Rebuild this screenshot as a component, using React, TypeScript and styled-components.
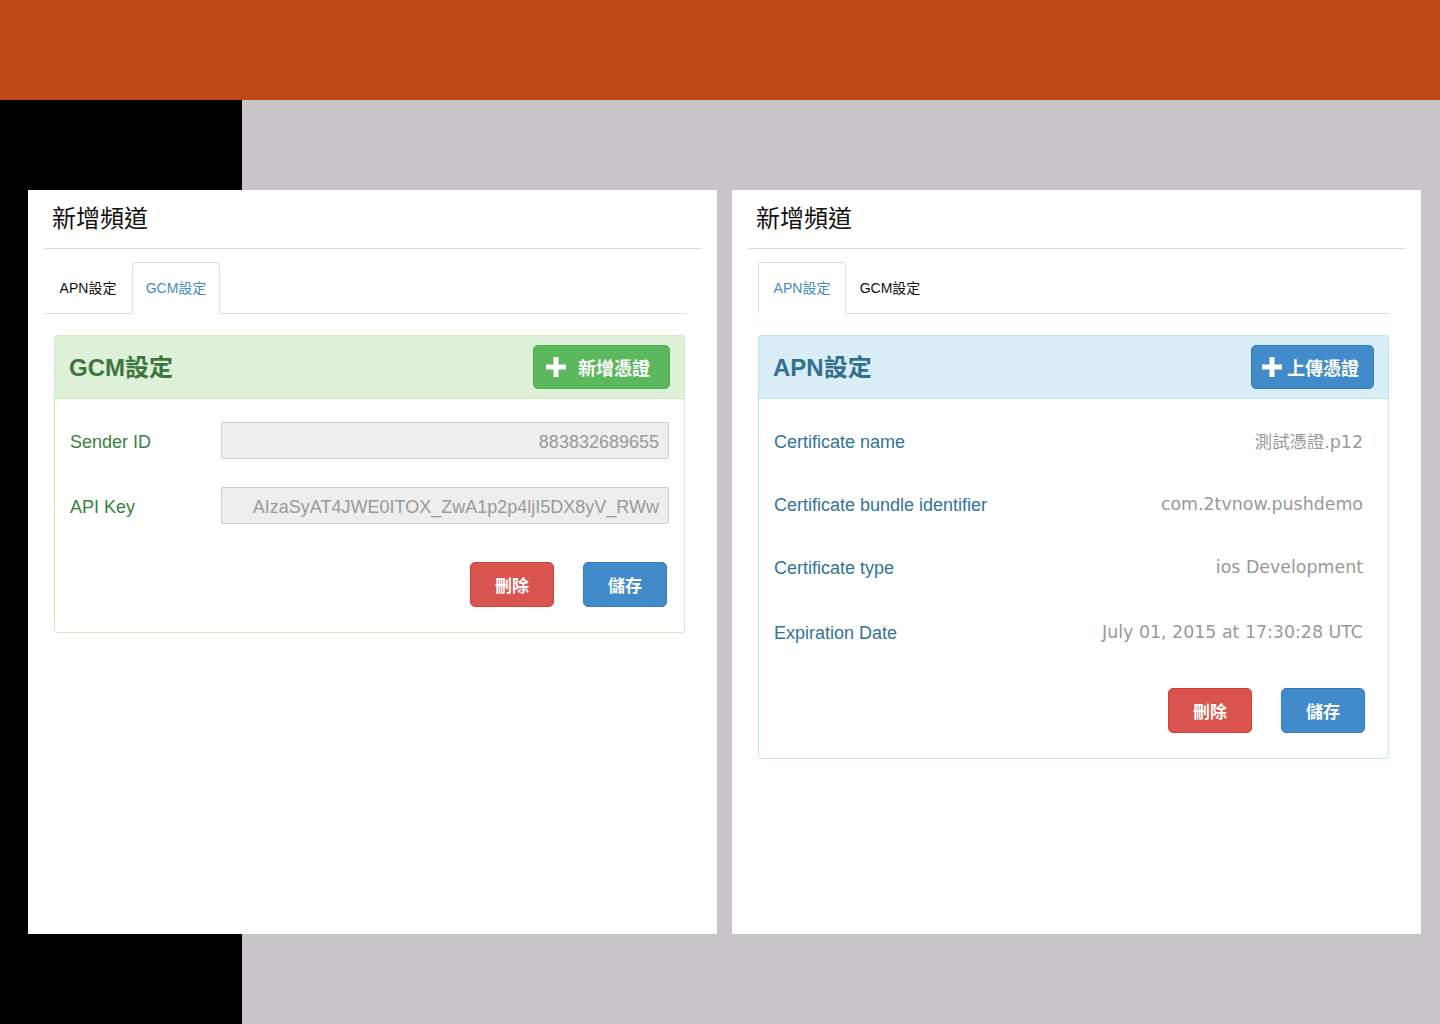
import React from "react";
import styled, { createGlobalStyle } from "styled-components";

const FONT = `"Liberation Sans", "Noto Sans CJK TC", sans-serif`;

const GlobalStyle = createGlobalStyle`
  html, body { margin: 0; padding: 0; }
  body { font-family: ${FONT}; background: #c7c5c8; }
  * { box-sizing: border-box; }
`;

const Page = styled.div`
  width: 1440px;
  height: 1024px;
  display: flex;
  flex-direction: column;
  overflow: hidden;
`;

const TopBar = styled.div`
  height: 100px;
  flex: none;
  background: #bf4a17;
`;

const Stage = styled.div`
  flex: 1;
  display: flex;
  gap: 15px;
  padding: 90px 0 0 28px;
  background: linear-gradient(to right, #000 0, #000 242px, #c7c5c8 242px);
`;

const Card = styled.section`
  width: 689px;
  height: 744px;
  background: #fff;
  padding: 0 16px;
  display: flex;
  flex-direction: column;
`;

const CardTitle = styled.h2`
  margin: 0;
  height: 59px;
  padding: 13px 0 0 8px;
  font-size: 24px;
  font-weight: 400;
  line-height: 32px;
  color: #111;
  border-bottom: 1px solid #ddd;
`;

const TabList = styled.div<{ $inset: number; $end: number }>`
  display: flex;
  margin: 13px ${(p) => p.$end}px 0 ${(p) => p.$inset}px;
  border-bottom: 1px solid #ddd;
  height: 52px;
`;

const Tab = styled.div<{ $active?: boolean }>`
  width: 88px;
  height: 52px;
  margin-bottom: -1px;
  padding: 0 0 3px;
  display: flex;
  align-items: center;
  justify-content: center;
  font-size: 14px;
  color: ${(p) => (p.$active ? "#428bca" : "#111")};
  background: ${(p) => (p.$active ? "#fff" : "transparent")};
  border: 1px solid ${(p) => (p.$active ? "#ddd" : "transparent")};
  border-bottom-color: ${(p) => (p.$active ? "#fff" : "transparent")};
  border-radius: 4px 4px 0 0;
`;

const Panel = styled.div<{ $border: string }>`
  margin: 21px 16px 0 10px;
  border: 1px solid ${(p) => p.$border};
  border-radius: 3px;
`;

const PanelHeading = styled.div<{ $bg: string; $border: string }>`
  height: 63px;
  padding: 9px 14px 0 14px;
  display: flex;
  justify-content: space-between;
  background: ${(p) => p.$bg};
  border-bottom: 1px solid ${(p) => p.$border};
`;

const PanelTitle = styled.h3<{ $color: string }>`
  margin: 0;
  font-size: 24px;
  font-weight: 700;
  line-height: 46px;
  color: ${(p) => p.$color};
`;

const AddButton = styled.button<{ $bg: string; $border: string; $width: number; $gap: number; $pad: number }>`
  width: ${(p) => p.$width}px;
  height: 44px;
  padding: 0 0 0 ${(p) => p.$pad}px;
  display: flex;
  align-items: center;
  gap: ${(p) => p.$gap}px;
  background: ${(p) => p.$bg};
  border: 1px solid ${(p) => p.$border};
  border-radius: 5px;
  color: #fff;
  font-family: ${FONT};
  font-size: 18px;
  font-weight: 700;
`;

const PlusIcon = () => (
  <svg width="20" height="20" viewBox="0 0 20 20">
    <rect x="7.5" y="0" width="5" height="20" fill="#fff" />
    <rect x="0" y="7.5" width="20" height="5" fill="#fff" />
  </svg>
);

const FormBody = styled.div`
  padding: 23px 15px 0 15px;
  display: flex;
  flex-direction: column;
  gap: 28px;
`;

const FieldRow = styled.div`
  display: flex;
  align-items: center;
`;

const FieldLabel = styled.label`
  width: 151px;
  flex: none;
  font-size: 18px;
  padding-top: 3px;
  color: #3b8040;
`;

const ReadOnlyInput = styled.div`
  flex: 1;
  height: 37px;
  padding: 4px 9px 0;
  background: #eee;
  border: 1px solid #ccc;
  border-radius: 2px;
  display: flex;
  align-items: center;
  justify-content: flex-end;
  font-size: 18px;
  color: #999;
  white-space: nowrap;
  overflow: hidden;
`;

const InfoBody = styled.div`
  padding: 12px 25px 0 15px;
  display: flex;
  flex-direction: column;
`;

const InfoRow = styled.div`
  height: 63px;
  display: flex;
  align-items: center;
  justify-content: space-between;
  &:last-child { height: 65px; padding-top: 2px; }
`;

const InfoLabel = styled.span`
  font-size: 18px;
  color: #31739a;
`;

const InfoValue = styled.span`
  font-family: "DejaVu Sans", "Noto Sans CJK TC", sans-serif;
  font-size: 17.4px;
  color: #999;
  margin-top: -4px;
`;

const ActionRow = styled.div<{ $top: number; $right: number }>`
  display: flex;
  justify-content: flex-end;
  gap: 29px;
  padding: ${(p) => p.$top}px ${(p) => p.$right}px 25px 0;
`;

const ActionButton = styled.button<{ $variant: "danger" | "primary" }>`
  width: 84px;
  height: 45px;
  border-radius: 5px;
  font-family: ${FONT};
  font-size: 17px;
  font-weight: 700;
  color: #fff;
  background: ${(p) => (p.$variant === "danger" ? "#d9534f" : "#428bca")};
  border: 1px solid ${(p) => (p.$variant === "danger" ? "#d43f3a" : "#357ebd")};
`;

const GcmCard = () => (
  <Card>
    <CardTitle>新增頻道</CardTitle>
    <TabList $inset={0} $end={14}>
      <Tab>APN設定</Tab>
      <Tab $active>GCM設定</Tab>
    </TabList>
    <Panel $border="#d6e9c6">
      <PanelHeading $bg="#dff0d8" $border="#d6e9c6">
        <PanelTitle $color="#3c763d">GCM設定</PanelTitle>
        <AddButton $bg="#5cb85c" $border="#4cae4c" $width={137} $pad={12} $gap={12}>
          <PlusIcon />
          新增憑證
        </AddButton>
      </PanelHeading>
      <FormBody>
        <FieldRow>
          <FieldLabel>Sender ID</FieldLabel>
          <ReadOnlyInput>883832689655</ReadOnlyInput>
        </FieldRow>
        <FieldRow>
          <FieldLabel>API Key</FieldLabel>
          <ReadOnlyInput>AIzaSyAT4JWE0ITOX_ZwA1p2p4ljI5DX8yV_RWw</ReadOnlyInput>
        </FieldRow>
      </FormBody>
      <ActionRow $top={38} $right={17}>
        <ActionButton $variant="danger">刪除</ActionButton>
        <ActionButton $variant="primary">儲存</ActionButton>
      </ActionRow>
    </Panel>
  </Card>
);

const apnRows = [
  ["Certificate name", "測試憑證.p12"],
  ["Certificate bundle identifier", "com.2tvnow.pushdemo"],
  ["Certificate type", "ios Development"],
  ["Expiration Date", "July 01, 2015 at 17:30:28 UTC"],
];

const ApnCard = () => (
  <Card>
    <CardTitle>新增頻道</CardTitle>
    <TabList $inset={10} $end={16}>
      <Tab $active>APN設定</Tab>
      <Tab>GCM設定</Tab>
    </TabList>
    <Panel $border="#bce8f1">
      <PanelHeading $bg="#d9edf7" $border="#bce8f1">
        <PanelTitle $color="#31708f">APN設定</PanelTitle>
        <AddButton $bg="#428bca" $border="#357ebd" $width={123} $pad={10} $gap={5}>
          <PlusIcon />
          上傳憑證
        </AddButton>
      </PanelHeading>
      <InfoBody>
        {apnRows.map(([label, value]) => (
          <InfoRow key={label}>
            <InfoLabel>{label}</InfoLabel>
            <InfoValue>{value}</InfoValue>
          </InfoRow>
        ))}
      </InfoBody>
      <ActionRow $top={23} $right={23}>
        <ActionButton $variant="danger">刪除</ActionButton>
        <ActionButton $variant="primary">儲存</ActionButton>
      </ActionRow>
    </Panel>
  </Card>
);

export default function App() {
  return (
    <>
      <GlobalStyle />
      <Page>
        <TopBar />
        <Stage>
          <GcmCard />
          <ApnCard />
        </Stage>
      </Page>
    </>
  );
}
